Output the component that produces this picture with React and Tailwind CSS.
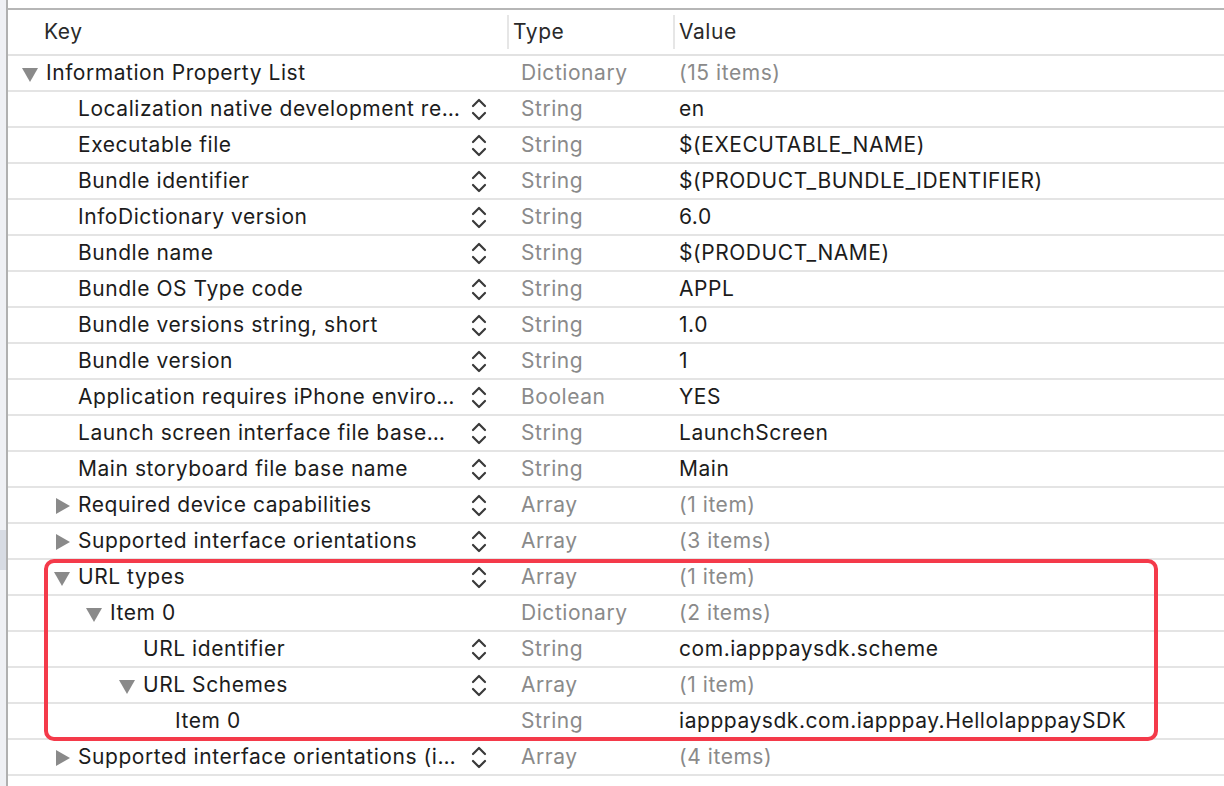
import React from "react";

const rows = [
  { k: "Information Property List", l: 0, t: "down", type: "Dictionary", v: "(15 items)", g: true, s: false },
  { k: "Localization native development re…", l: 1, type: "String", v: "en", s: true },
  { k: "Executable file", l: 1, type: "String", v: "$(EXECUTABLE_NAME)", s: true },
  { k: "Bundle identifier", l: 1, type: "String", v: "$(PRODUCT_BUNDLE_IDENTIFIER)", s: true },
  { k: "InfoDictionary version", l: 1, type: "String", v: "6.0", s: true },
  { k: "Bundle name", l: 1, type: "String", v: "$(PRODUCT_NAME)", s: true },
  { k: "Bundle OS Type code", l: 1, type: "String", v: "APPL", s: true },
  { k: "Bundle versions string, short", l: 1, type: "String", v: "1.0", s: true },
  { k: "Bundle version", l: 1, type: "String", v: "1", s: true },
  { k: "Application requires iPhone enviro…", l: 1, type: "Boolean", v: "YES", s: true },
  { k: "Launch screen interface file base…", l: 1, type: "String", v: "LaunchScreen", s: true },
  { k: "Main storyboard file base name", l: 1, type: "String", v: "Main", s: true },
  { k: "Required device capabilities", l: 1, t: "right", type: "Array", v: "(1 item)", g: true, s: true },
  { k: "Supported interface orientations", l: 1, t: "right", type: "Array", v: "(3 items)", g: true, s: true },
  { k: "URL types", l: 1, t: "down", type: "Array", v: "(1 item)", g: true, s: true },
  { k: "Item 0", l: 2, t: "down", type: "Dictionary", v: "(2 items)", g: true, s: false },
  { k: "URL identifier", l: 3, type: "String", v: "com.iapppaysdk.scheme", s: true },
  { k: "URL Schemes", l: 3, t: "down", type: "Array", v: "(1 item)", g: true, s: true },
  { k: "Item 0", l: 4, type: "String", v: "iapppaysdk.com.iapppay.HelloIapppaySDK", s: false },
  { k: "Supported interface orientations (i…", l: 1, t: "right", type: "Array", v: "(4 items)", g: true, s: true },
];

const indent = ["pl-[38px]", "pl-[70px]", "pl-[102px]", "pl-[135px]", "pl-[167px]"];

function Tri({ dir }) {
  if (dir === "down")
    return (
      <svg width="18" height="16" viewBox="0 0 18 16" className="absolute left-[-25px] top-[11px]">
        <polygon points="1,1 17,1 9,15" fill="#8a8a8a" />
      </svg>
    );
  return (
    <svg width="16" height="18" viewBox="0 0 16 18" className="absolute left-[-23px] top-[9px]">
      <polygon points="1,1 15,9 1,17" fill="#8a8a8a" />
    </svg>
  );
}

function Stepper() {
  return (
    <svg width="16" height="26" viewBox="0 0 16 26" className="shrink-0 mt-[2px]">
      <polyline points="2,9 8,3 14,9" fill="none" stroke="#3a3a3a" strokeWidth="2.2" strokeLinecap="round" strokeLinejoin="round" />
      <polyline points="2,16 8,22 14,16" fill="none" stroke="#3a3a3a" strokeWidth="2.2" strokeLinecap="round" strokeLinejoin="round" />
    </svg>
  );
}

export default function App() {
  return (
    <div
      className="flex w-[1224px] h-[786px] bg-white overflow-hidden text-[21px] tracking-[0.55px] text-[#1c1c1c]"
      style={{ fontFamily: "Inter, 'Liberation Sans', sans-serif" }}
    >
      <div className="w-[6px] flex flex-col bg-[#eff0f4]">
        <div className="h-[530px]" />
        <div className="h-[40px] bg-[#d7dbe3]" />
      </div>
      <div className="w-[2px] bg-[#b0b0b0]" />
      <div className="flex-1 flex flex-col relative">
        <div className="h-[8px]" />
        <div className="h-[2px] bg-[#b6b6b6]" />
        <div className="h-[46px] flex items-center border-b-2 border-[#e2e2e2] shrink-0">
          <div className="w-[499px] pl-[36px] text-[#2a2a2a]">Key</div>
          <div className="w-[2px] h-[34px] bg-[#e6e6e6]" />
          <div className="w-[164px] pl-[4px] text-[#2a2a2a]">Type</div>
          <div className="w-[2px] h-[34px] bg-[#e6e6e6]" />
          <div className="pl-[4px] text-[#2a2a2a]">Value</div>
        </div>
        {rows.map((r, i) => (
          <div key={i} className="h-[36px] flex items-center border-b-2 border-[#e4e4e4] shrink-0">
            <div className={`w-[501px] h-full flex items-center justify-between pr-[22px] ${indent[r.l]}`}>
              <div className="relative h-full flex items-center whitespace-nowrap">
                {r.t && <Tri dir={r.t} />}
                {r.k}
              </div>
              {r.s && <Stepper />}
            </div>
            <div className="w-[164px] pl-[12px] text-[#8a8a8a]">{r.type}</div>
            <div className={`pl-[6px] whitespace-nowrap ${r.g ? "text-[#8a8a8a]" : "text-[#1c1c1c]"}`}>{r.v}</div>
          </div>
        ))}
        <div className="absolute left-[36px] top-[559px] w-[1114px] h-[182px] border-[4px] border-[#f43a4a] rounded-[10px] pointer-events-none" />
      </div>
    </div>
  );
}
